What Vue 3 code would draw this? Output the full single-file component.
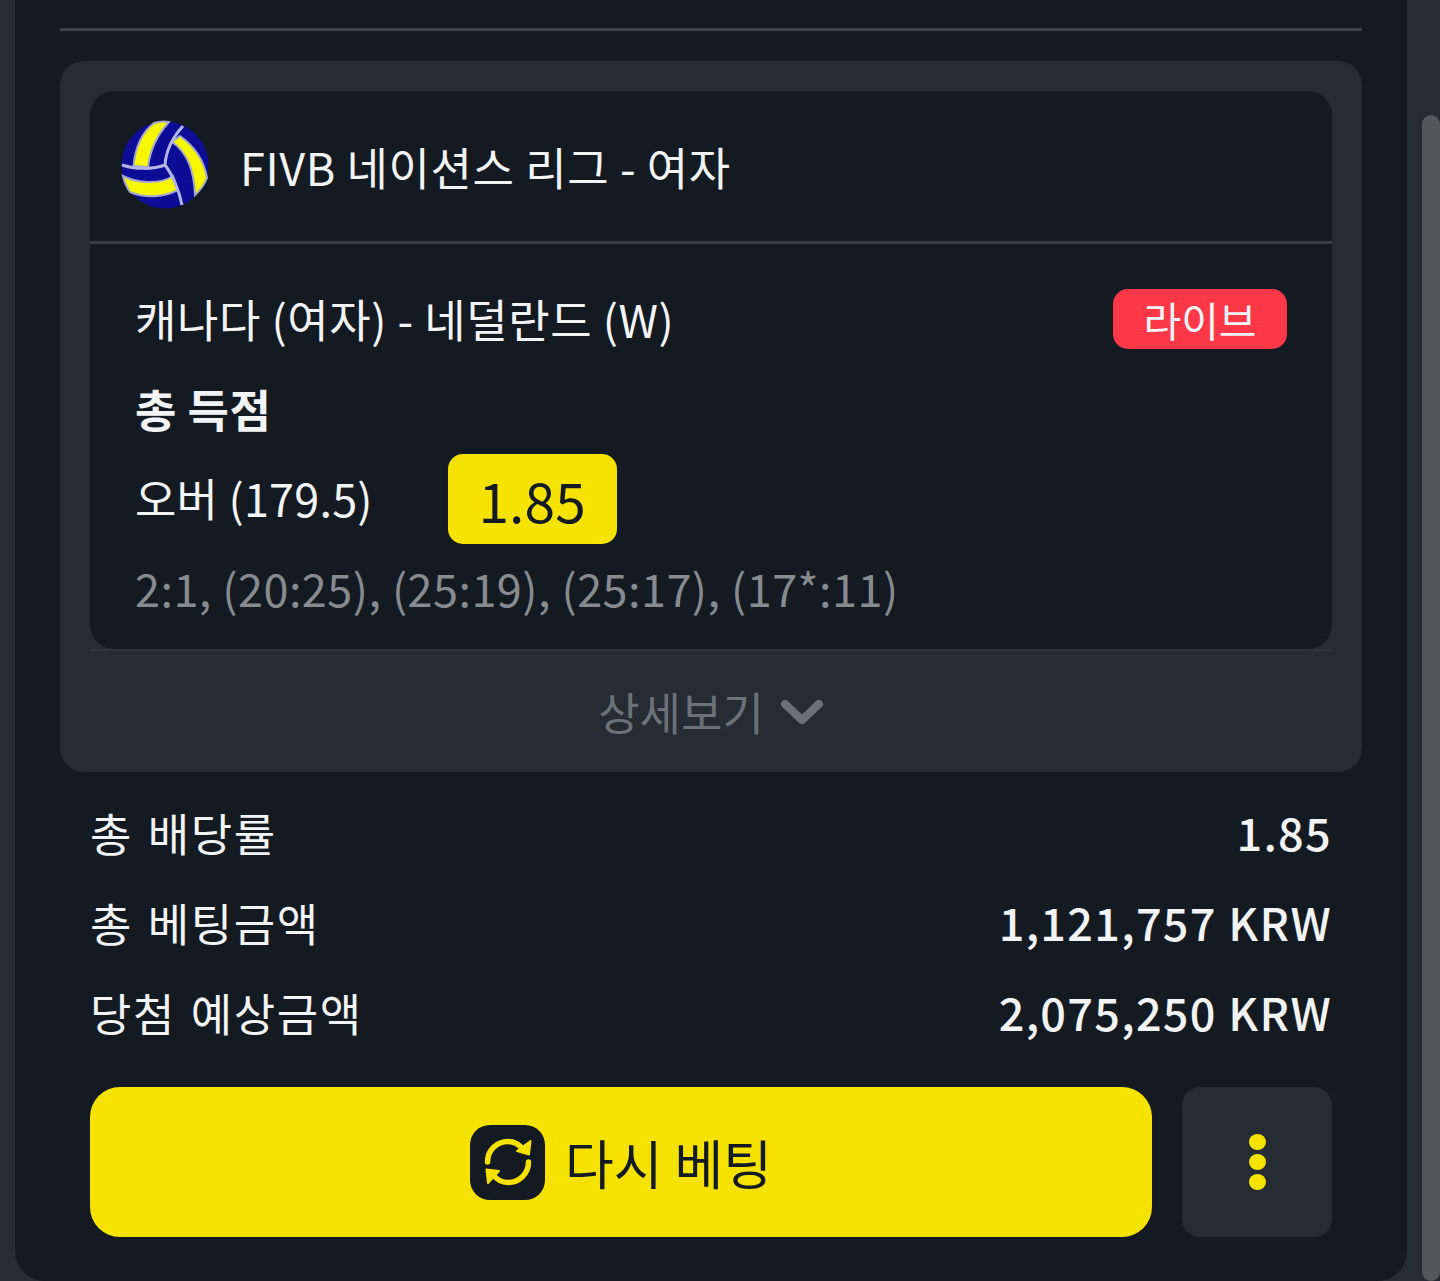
<template>
  <div class="screen">
    <div class="panel">
      <div class="top-line"></div>
      <div class="bet-card">
        <div class="bet-inner">
          <div class="league">
            <svg class="ball" viewBox="0 0 90 90" width="90" height="90">
              <circle cx="45" cy="45" r="43.5" fill="#0c0c96" />
              <path d="M34 3 C21 13 15 30 13.5 46 L28 47 C30 30 38 14 49 2 Q42 0.5 34 3Z" fill="#f7f700" stroke="#a6a8d0" stroke-width="2" />
              <path d="M52 22 C64 30 74 46 75 75 Q83 68 87 58 C84 40 74 26 60 16Z" fill="#f7f700" stroke="#a6a8d0" stroke-width="2" />
              <path d="M3 56 C14 62 38 66 53 56 L58 70 C42 78 24 78 10 72 Q5 65 3 56Z" fill="#f7f700" stroke="#a6a8d0" stroke-width="2" />
              <path d="M2 45 C14 49 32 50 45 45 C52 54 59 70 62 85 M45 45 C46 30 52 18 63 6" fill="none" stroke="#b4b4e6" stroke-width="3" />
            </svg>
            <span class="league-name">FIVB 네이션스 리그 - 여자</span>
          </div>
          <div class="match">
            <div class="match-head">
              <span class="teams">캐나다 (여자) - 네덜란드 (W)</span>
              <span class="live">라이브</span>
            </div>
            <div class="market">총 득점</div>
            <div class="pick">
              <span class="pick-name">오버 (179.5)</span>
              <span class="odds">1.85</span>
            </div>
            <div class="score">2:1, (20:25), (25:19), (25:17), (17*:11)</div>
          </div>
        </div>
        <div class="more">
          <span>상세보기</span>
          <svg class="chevron" viewBox="0 0 44 30" width="44" height="30">
            <path d="M5 7 L22 23 L39 7" fill="none" stroke="#6b7178" stroke-width="8" stroke-linecap="round" stroke-linejoin="round" />
          </svg>
        </div>
      </div>
      <div class="summary">
        <div v-for="row in rows" :key="row.label" class="sum-row">
          <span class="sum-label">{{ row.label }}</span>
          <span class="sum-value">{{ row.value }}</span>
        </div>
      </div>
      <div class="actions">
        <button class="rebet">
          <span class="rebet-icon">
            <svg viewBox="0 0 50 50" width="50" height="50">
              <path d="M4.5 25 C4.5 13 14 4.5 25 4.5 C31 4.5 36 7 40 12.5" fill="none" stroke="#f5e200" stroke-width="5.5" stroke-linecap="round" />
              <path d="M47.5 4 L46 17.5 L34 14Z" fill="#f5e200" stroke="#f5e200" stroke-width="2" stroke-linejoin="round" />
              <path d="M45.5 25 C45.5 37 36 45.5 25 45.5 C19 45.5 14 43 10 37.5" fill="none" stroke="#f5e200" stroke-width="5.5" stroke-linecap="round" />
              <path d="M3.5 32.5 L16 34 L5 46Z" fill="#f5e200" stroke="#f5e200" stroke-width="2" stroke-linejoin="round" />
            </svg>
          </span>
          <span>다시 베팅</span>
        </button>
        <button class="kebab">
          <i></i><i></i><i></i>
        </button>
      </div>
    </div>
    <div class="thumb"></div>
  </div>
</template>

<script setup>
const rows = [
  { label: '총 배당률', value: '1.85' },
  { label: '총 베팅금액', value: '1,121,757 KRW' },
  { label: '당첨 예상금액', value: '2,075,250 KRW' },
]
</script>

<style>
html, body { background: #262c34; }
</style>

<style scoped>
.screen {
  position: relative;
  height: 1281px;
  overflow: hidden;
  box-sizing: border-box;
  padding: 0 33px 0 15px;
  background: #262c34;
  font-family: "Noto Sans CJK KR", "Noto Sans", sans-serif;
  color: #f2f3f4;
}
.panel {
  height: 1281px;
  box-sizing: border-box;
  padding: 28px 45px 0;
  background: #141a22;
  border-radius: 0 0 30px 30px;
}
.top-line { height: 3px; background: #404145; }
.bet-card {
  margin-top: 30px;
  padding: 30px 30px 0;
  height: 711px;
  box-sizing: border-box;
  background: #262c34;
  border-radius: 24px;
}
.bet-inner {
  height: 558px;
  box-sizing: border-box;
  background: #141a22;
  border-radius: 24px;
}
.league {
  height: 153px;
  box-sizing: border-box;
  padding: 0 30px;
  display: flex;
  align-items: center;
  gap: 30px;
  border-bottom: 3px solid #3a3d43;
}
.ball { flex: none; margin-top: -3px; }
.league-name { font-size: 45px; line-height: 60px; letter-spacing: 0.6px; padding-top: 2px; }
.match { padding: 37px 45px 0; font-size: 45px; }
.match-head { display: flex; justify-content: space-between; align-items: center; height: 75px; }
.teams { line-height: 60px; letter-spacing: 0.55px; }
.live {
  width: 174px;
  height: 60px;
  display: flex;
  align-items: center;
  justify-content: center;
  background: #fb3748;
  border-radius: 15px;
  font-size: 41px;
}
.market { font-weight: 700; line-height: 60px; margin-top: 23px; letter-spacing: 0.5px; }
.pick { display: flex; align-items: center; gap: 75px; margin-top: 15px; height: 90px; letter-spacing: 0.2px; }
.pick-name { margin-bottom: 4px; }
.odds {
  width: 169px;
  height: 90px;
  display: flex;
  align-items: center;
  justify-content: center;
  background: #f5e200;
  border-radius: 15px;
  color: #141a22;
  font-size: 55px;
}
.score { color: #878b90; line-height: 60px; margin-top: 14px; letter-spacing: 0.46px; }
.more {
  height: 122px;
  box-sizing: border-box;
  border-top: 2px solid #30363e;
  display: flex;
  align-items: center;
  justify-content: center;
  gap: 16px;
  color: #6b7178;
  font-size: 45px;
}
.chevron { margin-top: 2px; }
.summary { padding: 14px 30px 0; font-size: 45px; }
.sum-row { display: flex; justify-content: space-between; align-items: center; height: 90px; }
.sum-label { letter-spacing: 1.6px; word-spacing: 3px; padding-top: 2px; }
.sum-value { font-weight: 500; letter-spacing: 1.3px; }
.actions { display: flex; gap: 30px; margin-top: 31px; padding: 0 30px; }
.rebet {
  flex: 1;
  height: 150px;
  display: flex;
  align-items: center;
  justify-content: center;
  gap: 20px;
  border: none;
  background: #f5e200;
  border-radius: 30px;
  color: #141a22;
  font: inherit;
  font-size: 53px;
}
.rebet-icon {
  width: 75px;
  height: 75px;
  display: flex;
  align-items: center;
  justify-content: center;
  background: #141a22;
  border-radius: 20px;
}
.kebab {
  width: 150px;
  height: 150px;
  display: flex;
  flex-direction: column;
  align-items: center;
  justify-content: center;
  gap: 4px;
  border: none;
  background: #262c34;
  border-radius: 18px;
}
.kebab i { width: 17px; height: 16px; border-radius: 50%; background: #f5e200; }
.thumb {
  position: absolute;
  top: 115px;
  right: 0;
  width: 18px;
  height: 1166px;
  background: #555659;
  border-radius: 9px;
}
</style>
